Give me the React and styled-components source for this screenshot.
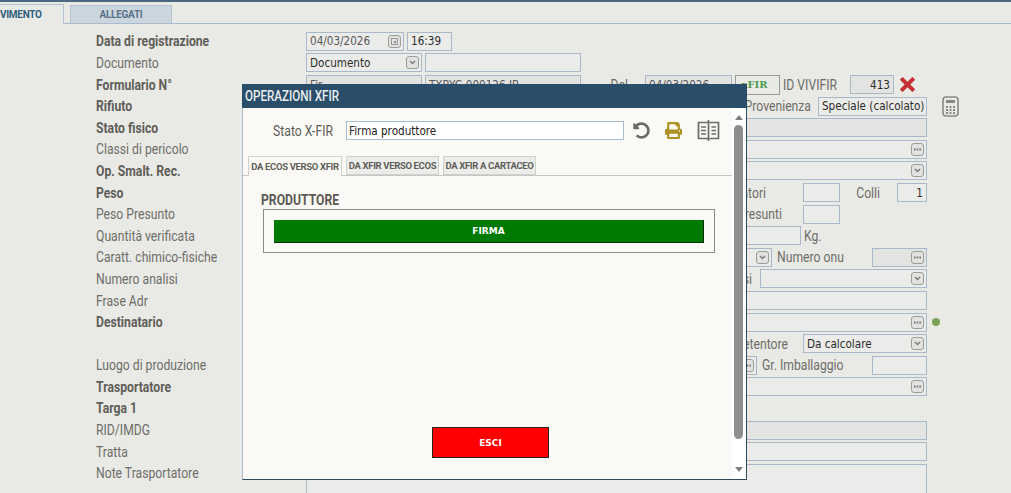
import styled, { createGlobalStyle } from 'styled-components';
import { FaPrint, FaUndoAlt } from 'react-icons/fa';
import { ImCross } from 'react-icons/im';

const GlobalStyle = createGlobalStyle`
  html, body {
    margin: 0;
    height: 493px;
    overflow: hidden;
    background: #e9e9e6;
  }
`;

const labelFont = `Roboto, "Liberation Sans", sans-serif`;
const fieldFont = `"DejaVu Sans Condensed", "DejaVu Sans", sans-serif`;

const Page = styled.div`
  position: relative;
  width: 1011px;
  height: 493px;
  overflow: hidden;
  border-top: 2px solid #4a687f;
  box-sizing: border-box;
`;

const TabBar = styled.div`
  display: flex;
  align-items: flex-end;
  gap: 6px;
  height: 21px;
  border-bottom: 1px solid #a9bbcd;
`;

const TopTab = styled.div`
  height: ${(p) => (p.$active ? 20 : 18)}px;
  width: ${(p) => p.$w}px;
  box-sizing: border-box;
  display: flex;
  align-items: center;
  justify-content: ${(p) => (p.$active ? 'flex-start' : 'center')};
  font: bold 10px ${labelFont};
  letter-spacing: -0.3px;
  color: ${(p) => (p.$active ? '#2f5f7f' : '#5a7286')};
  background: ${(p) => (p.$active ? '#e9e9e6' : '#cbd6df')};
  border: 1px solid #b4c3d1;
  border-left: ${(p) => (p.$active ? 'none' : '1px solid #b4c3d1')};
  border-bottom: ${(p) => (p.$active ? '1px solid #e9e9e6' : 'none')};
  margin-bottom: ${(p) => (p.$active ? '-1px' : '0')};
`;

const Form = styled.div`
  display: grid;
  grid-auto-rows: 21.6px;
  padding: 6.6px 0 0 96px;
`;

const Row = styled.div`
  display: flex;
  align-items: center;
`;

const Label = styled.div`
  width: 210px;
  flex: none;
  font: ${(p) => (p.$bold ? 'bold' : 'normal')} 14px ${labelFont};
  color: ${(p) => (p.$bold ? '#5f5e58' : '#6e6e68')};
  white-space: nowrap;
  transform: scaleX(0.87);
  transform-origin: left center;
`;

const Fields = styled.div`
  display: flex;
  align-items: center;
  gap: 3px;
  width: 621px;
  flex: none;
`;

const Field = styled.div`
  box-sizing: border-box;
  height: 19px;
  width: ${(p) => (p.$w ? `${p.$w}px` : 'auto')};
  flex: ${(p) => (p.$w ? 'none' : '1')};
  display: flex;
  align-items: center;
  justify-content: ${(p) => (p.$right ? 'flex-end' : 'space-between')};
  padding: 0 3px;
  border: 1px solid #a9b9c9;
  background: ${(p) => (p.$dark ? '#e3e3e1' : '#ebebe9')};
  font: 11.6px ${fieldFont};
  color: ${(p) => (p.$muted ? '#55585a' : '#2c2c2c')};
  white-space: nowrap;
  overflow: hidden;
`;

const SideLabel = styled.div`
  width: ${(p) => p.$w}px;
  flex: none;
  margin-left: ${(p) => p.$ml || 0}px;
  text-align: ${(p) => (p.$right ? 'right' : 'left')};
  font: 14px ${labelFont};
  color: #6e6e68;
  white-space: nowrap;
  transform: scaleX(0.87);
  transform-origin: ${(p) => (p.$right ? 'right' : 'left')} center;
`;

const Gap = styled.div`
  flex: none;
  width: ${(p) => p.$w}px;
`;

const MiniButton = styled.span`
  flex: none;
  box-sizing: border-box;
  width: 13px;
  height: 13px;
  margin-right: -1px;
  display: flex;
  align-items: center;
  justify-content: center;
  border: 1px solid #9c9c98;
  border-radius: 3px;
  background: #e2e2e0;
`;

const Chevron = () => (
  <MiniButton>
    <svg width="7" height="5" viewBox="0 0 7 5">
      <path d="M1 1l2.5 2.5L6 1" fill="none" stroke="#777" strokeWidth="1.3" />
    </svg>
  </MiniButton>
);

const Dots = () => (
  <MiniButton>
    <svg width="7" height="3" viewBox="0 0 7 3">
      <path d="M0 .5h1.6v2H0zM2.7 .5h1.6v2H2.7zM5.4 .5H7v2H5.4z" fill="#777" />
    </svg>
  </MiniButton>
);

const CalendarButton = () => (
  <MiniButton>
    <svg width="7" height="7" viewBox="0 0 7 7">
      <rect x=".5" y=".5" width="6" height="6" fill="none" stroke="#999" />
      <rect x="3" y="3" width="2" height="2" fill="#888" />
    </svg>
  </MiniButton>
);

const XfirButton = styled.div`
  box-sizing: border-box;
  flex: none;
  width: 45px;
  height: 20px;
  display: flex;
  align-items: center;
  justify-content: center;
  padding-right: 6px;
  border: 1px solid #9a9a94;
  font: bold 10px "DejaVu Serif", serif;
  color: #4c9a4c;
`;

const RemoveIcon = styled(ImCross)`
  flex: none;
  color: #c62f33;
  font-size: 15px;
  margin-left: 3px;
`;

const CalcIcon = styled.svg`
  flex: none;
  margin-left: 15px;
`;

const StatusDot = styled.span`
  flex: none;
  width: 8px;
  height: 8px;
  border-radius: 50%;
  margin-left: 5px;
  background: #7fa356;
`;

const Note = styled(Field)`
  height: 40px;
  margin-bottom: -21px;
`;

const Modal = styled.div`
  position: absolute;
  left: 242px;
  top: 82px;
  width: 505px;
  height: 396px;
  box-sizing: border-box;
  display: flex;
  flex-direction: column;
  background: #fbf9f5;
  border-left: 1px solid #a9bdd0;
  border-right: 1px solid #2a4a62;
  border-bottom: 1px solid #2a4a62;
`;

const ModalHeader = styled.div`
  height: 24px;
  flex: none;
  margin-left: -1px;
  padding-left: 3px;
  display: flex;
  align-items: center;
  background: #2a4d69;
`;

const ModalTitle = styled.span`
  color: #e8edf1;
  font: 500 14px ${labelFont};
  transform: scaleX(0.83);
  transform-origin: left center;
  white-space: nowrap;
`;

const ModalBody = styled.div`
  flex: 1;
  display: flex;
  min-height: 0;
`;

const Content = styled.div`
  flex: 1;
  display: flex;
  flex-direction: column;
  min-width: 0;
`;

const StatoRow = styled.div`
  display: flex;
  align-items: center;
  height: 19px;
  margin-top: 13px;
`;

const StatoLabel = styled.div`
  width: 90px;
  text-align: right;
  font: 14px ${labelFont};
  color: #5d5d58;
  transform: scaleX(0.87);
  transform-origin: right center;
`;

const StatoInput = styled.div`
  box-sizing: border-box;
  width: 278px;
  height: 19px;
  margin-left: 13px;
  padding-left: 2px;
  display: flex;
  align-items: center;
  background: #fff;
  border: 1px solid #a9bdd0;
  font: 11.6px ${fieldFont};
  color: #222;
`;

const ToolIcons = styled.div`
  display: flex;
  align-items: center;
  margin-left: 9px;
  gap: 15px;
`;

const PrintIcon = styled(FaPrint)`
  color: #ab9223;
  font-size: 17px;
`;

const UndoIcon = styled(FaUndoAlt)`
  color: #6a6a6a;
  font-size: 17px;
`;

const TabStrip = styled.div`
  display: flex;
  align-items: flex-end;
  gap: 4px;
  height: 20px;
  margin-top: 15px;
  padding-left: 5px;
  border-bottom: 1px solid #c6c6c2;
`;

const InnerTab = styled.div`
  box-sizing: border-box;
  width: ${(p) => p.$w}px;
  height: ${(p) => (p.$active ? 20 : 19)}px;
  margin-bottom: ${(p) => (p.$active ? '-1px' : '0')};
  display: flex;
  align-items: center;
  justify-content: center;
  font: bold 9.5px ${labelFont};
  letter-spacing: -0.35px;
  color: #5f5f5a;
  background: ${(p) => (p.$active ? '#fbf9f5' : '#ececea')};
  border: 1px solid #d0d0cc;
  border-bottom: ${(p) => (p.$active ? 'none' : '1px solid #d0d0cc')};
`;

const SectionTitle = styled.div`
  margin: 16px 0 0 18px;
  height: 17px;
  font: bold 14px ${labelFont};
  color: #5b5a54;
  transform: scaleX(0.87);
  transform-origin: left center;
`;

const SectionBox = styled.div`
  box-sizing: border-box;
  margin-left: 20px;
  width: 452px;
  height: 44px;
  padding: 10px 10px 0;
  border: 1px solid #8a8a86;
`;

const actionButton = `
  box-sizing: border-box;
  display: flex;
  align-items: center;
  justify-content: center;
  color: #fff;
  font: bold 9px "DejaVu Sans", sans-serif;
`;

const SignButton = styled.div`
  ${actionButton}
  height: 23px;
  background: #007a00;
  border-right: 1px solid #063006;
  border-bottom: 1px solid #063006;
`;

const ExitButton = styled.div`
  ${actionButton}
  width: 117px;
  height: 31px;
  margin: auto 0 21px 189px;
  background: #ff0000;
  border: 1px solid #222;
`;

const Scrollbar = styled.div`
  flex: none;
  width: 14px;
  box-sizing: border-box;
  padding-right: 1px;
  display: flex;
  flex-direction: column;
  align-items: center;
  background: #fff;
`;

const ScrollArrow = styled.span`
  width: 0;
  height: 0;
  margin: ${(p) => (p.$up ? '7px 0 5px' : 'auto 0 7px')};
  border-left: 4px solid transparent;
  border-right: 4px solid transparent;
  border-${(p) => (p.$up ? 'bottom' : 'top')}: 5px solid #7f7f7f;
`;

const ScrollThumb = styled.span`
  width: 9px;
  height: 314px;
  border-radius: 5px;
  background: #8e8e8e;
`;

const App = () => {
  return (
    <Page>
      <GlobalStyle />
      <TabBar>
        <TopTab $active $w={64}>VIMENTO</TopTab>
        <TopTab $w={102}>ALLEGATI</TopTab>
      </TabBar>
      <Form>
        <Row>
          <Label $bold>Data di registrazione</Label>
          <Fields>
            <Field $w={98} $muted>04/03/2026<CalendarButton /></Field>
            <Field $w={45}>16:39</Field>
          </Fields>
        </Row>
        <Row>
          <Label>Documento</Label>
          <Fields>
            <Field $w={116}>Documento<Chevron /></Field>
            <Field $w={156} />
          </Fields>
        </Row>
        <Row>
          <Label $bold>Formulario N°</Label>
          <Fields>
            <Field $w={116} $dark $muted>Fir</Field>
            <Field $w={156} $dark $muted>TXBYC-000126 JB</Field>
            <SideLabel $w={44} $right>Del</SideLabel>
            <Gap $w={11} />
            <Field $w={87} $dark $muted>04/03/2026</Field>
            <XfirButton>xFIR</XfirButton>
            <SideLabel $w={64}>ID VIVIFIR</SideLabel>
            <Field $w={44} $dark $right>413</Field>
            <RemoveIcon />
          </Fields>
        </Row>
        <Row>
          <Label $bold>Rifiuto</Label>
          <Fields>
            <Field $w={400} $dark />
            <SideLabel $w={102} $right>Provenienza</SideLabel>
            <Gap $w={1} />
            <Field $w={109}>Speciale (calcolato)</Field>
          </Fields>
          <CalcIcon width="17" height="21" viewBox="0 0 17 21">
            <rect x="1" y="1" width="15" height="19" rx="3" fill="none" stroke="#888" strokeWidth="1.6" />
            <rect x="4" y="4" width="9" height="3" fill="#888" />
            <path d="M4 10h2v2H4zM7.5 10h2v2h-2zM11 10h2v2h-2zM4 13h2v2H4zM7.5 13h2v2h-2zM11 13h2v2h-2zM4 16h2v2H4zM7.5 16h2v2h-2zM11 16h2v2h-2z" fill="#888" />
          </CalcIcon>
        </Row>
        <Row>
          <Label $bold>Stato fisico</Label>
          <Fields><Field $dark /></Fields>
        </Row>
        <Row>
          <Label>Classi di pericolo</Label>
          <Fields><Field><span /><Dots /></Field></Fields>
        </Row>
        <Row>
          <Label $bold>Op. Smalt. Rec.</Label>
          <Fields><Field><span /><Chevron /></Field></Fields>
        </Row>
        <Row>
          <Label $bold>Peso</Label>
          <Fields>
            <Field $w={300} />
            <SideLabel $w={157} $right>Contatori</SideLabel>
            <Gap $w={31} />
            <Field $w={37} />
            <SideLabel $w={37} $right>Colli</SideLabel>
            <Gap $w={11} />
            <Field $w={30} $right>1</Field>
          </Fields>
        </Row>
        <Row>
          <Label>Peso Presunto</Label>
          <Fields>
            <Field $w={300} />
            <SideLabel $w={173} $right>Kg. presunti</SideLabel>
            <Gap $w={15} />
            <Field $w={37} />
          </Fields>
        </Row>
        <Row>
          <Label>Quantità verificata</Label>
          <Fields>
            <Field $w={495} />
            <SideLabel $w={30}>Kg.</SideLabel>
          </Fields>
        </Row>
        <Row>
          <Label>Caratt. chimico-fisiche</Label>
          <Fields>
            <Field $w={466}><span /><Chevron /></Field>
            <SideLabel $w={92} $ml={2}>Numero onu</SideLabel>
            <Field $w={55} $dark><span /><Dots /></Field>
          </Fields>
        </Row>
        <Row>
          <Label>Numero analisi</Label>
          <Fields>
            <SideLabel $w={446} $right>Analisi</SideLabel>
            <Gap $w={2} />
            <Field><span /><Chevron /></Field>
          </Fields>
        </Row>
        <Row>
          <Label>Frase Adr</Label>
          <Fields><Field /></Fields>
        </Row>
        <Row>
          <Label $bold>Destinatario</Label>
          <Fields><Field><span /><Dots /></Field></Fields>
          <StatusDot />
        </Row>
        <Row>
          <Label />
          <Fields>
            <SideLabel $w={482} $right>Detentore</SideLabel>
            <Gap $w={9} />
            <Field>Da calcolare<Chevron /></Field>
          </Fields>
        </Row>
        <Row>
          <Label>Luogo di produzione</Label>
          <Fields>
            <Field $w={451}><span /><Dots /></Field>
            <SideLabel $w={107} $ml={2}>Gr. Imballaggio</SideLabel>
            <Field $w={55} />
          </Fields>
        </Row>
        <Row>
          <Label $bold>Trasportatore</Label>
          <Fields><Field><span /><Dots /></Field></Fields>
        </Row>
        <Row>
          <Label $bold>Targa 1</Label>
        </Row>
        <Row>
          <Label>RID/IMDG</Label>
          <Fields><Field $dark /></Fields>
        </Row>
        <Row>
          <Label>Tratta</Label>
          <Fields><Field /></Fields>
        </Row>
        <Row>
          <Label>Note Trasportatore</Label>
          <Fields><Note /></Fields>
        </Row>
      </Form>

      <Modal>
        <ModalHeader><ModalTitle>OPERAZIONI XFIR</ModalTitle></ModalHeader>
        <ModalBody>
          <Content>
            <StatoRow>
              <StatoLabel>Stato X-FIR</StatoLabel>
              <StatoInput>Firma produttore</StatoInput>
              <ToolIcons>
                <UndoIcon />
                <PrintIcon />
                <svg width="23" height="23" viewBox="0 0 23 23" fill="none" stroke="#6c6c6c" strokeWidth="1.7">
                  <path d="M10.5 3.5H1.5v16h9.5M12.5 3.5h9v16h-9M11.5 1v21" />
                  <path d="M4 8h5M4 11.5h5M4 15h5M14.5 8h4.5M14.5 11.5h4.5M14.5 15h4.5" />
                </svg>
              </ToolIcons>
            </StatoRow>
            <TabStrip>
              <InnerTab $active $w={94}>DA ECOS VERSO XFIR</InnerTab>
              <InnerTab $w={93}>DA XFIR VERSO ECOS</InnerTab>
              <InnerTab $w={93}>DA XFIR A CARTACEO</InnerTab>
            </TabStrip>
            <SectionTitle>PRODUTTORE</SectionTitle>
            <SectionBox>
              <SignButton>FIRMA</SignButton>
            </SectionBox>
            <ExitButton>ESCI</ExitButton>
          </Content>
          <Scrollbar>
            <ScrollArrow $up />
            <ScrollThumb />
            <ScrollArrow />
          </Scrollbar>
        </ModalBody>
      </Modal>
    </Page>
  );
};

export default App;
